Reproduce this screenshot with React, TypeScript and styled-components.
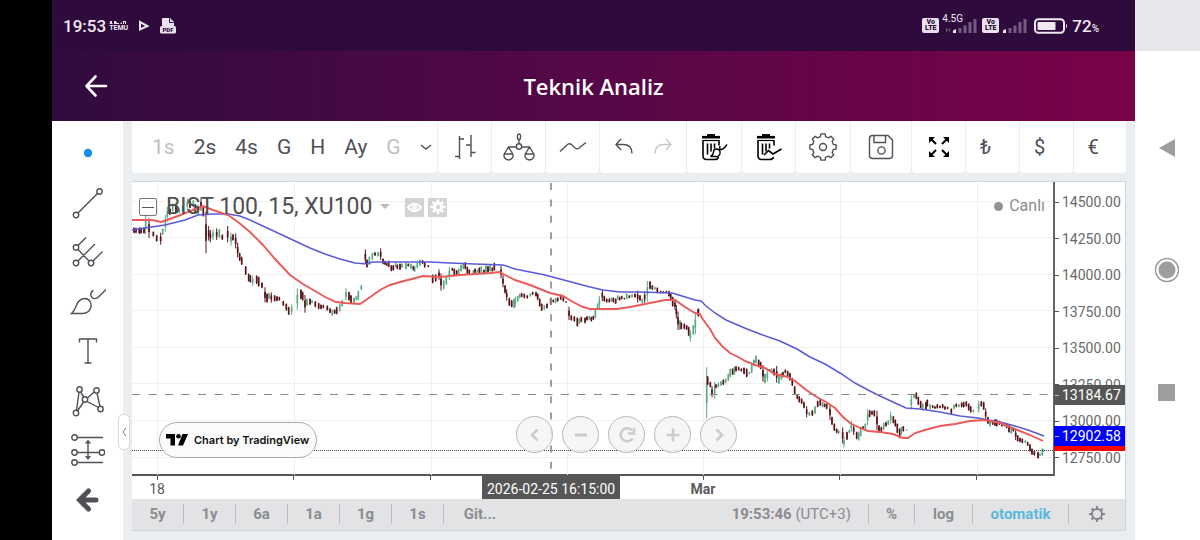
import React from 'react';
import styled, { createGlobalStyle, css } from 'styled-components';

const GlobalStyle = createGlobalStyle`
  *, *::before, *::after { box-sizing: border-box; }
  body { margin: 0; background: #fff; font-family: Roboto, "Liberation Sans", sans-serif; color: #4f5058; }
  button { margin: 0; padding: 0; border: 0; background: none; font: inherit; color: inherit; cursor: pointer; }
  svg { display: block; }
`;

/* ---------- device frame ---------- */

const Device = styled.div`
  display: grid;
  grid-template-columns: 52px minmax(0, 1fr) 65px;
  min-height: 100vh;
`;

const Bezel = styled.div`
  background: #000;
`;

const Screen = styled.div`
  display: flex;
  flex-direction: column;
  min-width: 0;
  background: #ebeef1;
`;

const NavRail = styled.nav`
  display: flex;
  flex-direction: column;
  align-items: center;
  justify-content: center;
  gap: 92px;
  padding-right: 2px;
  background: linear-gradient(#e8e6eb 51px, #fff 51px);
`;

const NavButton = styled.button`
  width: 30px;
  height: 30px;
  display: grid;
  place-items: center;
`;

/* ---------- status bar ---------- */

const StatusBar = styled.div`
  height: 51px;
  padding: 0 36px 0 11px;
  display: flex;
  align-items: center;
  justify-content: space-between;
  background: #2e0a3d;
  color: #f0e9f2;
`;

const StatusGroup = styled.div`
  display: flex;
  align-items: center;
`;

const Clock = styled.span`
  font-size: 17px;
  line-height: 20px;
  font-weight: 500;
`;

const Temu = styled.span`
  margin: 0 11px 0 3px;
  font-size: 7px;
  line-height: 6px;
  font-weight: 700;
`;

const VoLte = styled.span`
  width: 17px;
  height: 15px;
  padding-top: 1px;
  border-radius: 2px;
  background: #e9e2ec;
  color: #2e0a3d;
  font-size: 7px;
  line-height: 6px;
  font-weight: 900;
  text-align: center;
`;

const Signal = styled.span<{ $gap: number }>`
  position: relative;
  margin: 0 ${(p) => p.$gap}px 0 3px;
`;

const NetType = styled.span`
  position: absolute;
  left: 0;
  top: -4px;
  font-size: 10px;
  line-height: 10px;
`;

const Percent = styled.small`
  font-size: 10px;
  line-height: 10px;
  font-weight: 500;
`;

/* ---------- page header ---------- */

const Header = styled.header`
  height: 70px;
  display: grid;
  grid-template-columns: 88px 1fr 88px;
  align-items: center;
  background: linear-gradient(90deg, #300b3f, #560747 50%, #7a0249);
  color: #fff;
`;

const BackButton = styled.button`
  width: 88px;
  height: 70px;
  display: grid;
  place-items: center;
`;

const Title = styled.h1`
  margin: 0;
  text-align: center;
  font: 600 22px/28px "Open Sans", sans-serif;
`;

/* ---------- drawing tools ---------- */

const Workspace = styled.div`
  flex: 1;
  display: grid;
  grid-template-columns: 71px minmax(0, 1fr);
  column-gap: 9px;
`;

const Tools = styled.aside`
  position: relative;
  display: flex;
  flex-direction: column;
  align-items: center;
  justify-content: space-between;
  padding: 12px 0 20px;
  background: #fff;
`;

const ToolButton = styled.button`
  width: 40px;
  height: 40px;
  display: grid;
  place-items: center;
`;

const CollapseHandle = styled.button`
  position: absolute;
  right: -7px;
  top: 293px;
  width: 12px;
  height: 36px;
  display: grid;
  place-items: center;
  border: 1px solid #d5d8dc;
  border-radius: 5px;
  background: #fff;
`;

/* ---------- top toolbar ---------- */

const ChartColumn = styled.main`
  min-width: 0;
  padding-right: 9px;
`;

const Toolbar = styled.div`
  display: flex;
  gap: 1px;
  height: 52px;
  margin-bottom: 8px;
`;

const ToolGroup = styled.div<{ $width?: number }>`
  ${(p) => (p.$width ? css`flex: 0 0 ${p.$width}px;` : css`flex: 1;`)}
  display: flex;
  align-items: center;
  justify-content: center;
  border-radius: 0 0 4px 4px;
  background: #fff;
`;

const IntervalGroup = styled(ToolGroup)`
  min-width: 0;
  justify-content: flex-start;
  gap: 19px;
  padding-left: 20px;
`;

const IntervalButton = styled.button<{ $muted?: boolean }>`
  font-size: 21px;
  line-height: 28px;
  color: ${(p) => (p.$muted ? '#bfc0c4' : '#4f5058')};
`;

const IconButton = styled.button`
  width: 39px;
  height: 52px;
  display: grid;
  place-items: center;
`;

const CurrencyButton = styled(IconButton)`
  padding-right: 14px;
  font-size: 20px;
`;

/* ---------- chart ---------- */

const ChartFrame = styled.section`
  position: relative;
  border: 1px solid #ccd8dd;
  border-width: 1px 1px 1px 0;
  background: #fff;
`;

const PlotRow = styled.div`
  display: grid;
  grid-template-columns: minmax(0, 1fr) 72px;
`;

const Pane = styled.div`
  position: relative;
  height: 294px;
  border-bottom: 2px solid #555;
`;

const Plot = styled.svg`
  width: 100%;
  height: 293px;
`;

const PriceAxis = styled.div`
  position: relative;
  display: flex;
  flex-direction: column;
  justify-content: space-between;
  height: 294px;
  padding: 10px 0 8px;
  border-left: 2px solid #666;
`;

const Price = styled.div`
  display: flex;
  align-items: center;
  gap: 3px;
  font-size: 14px;
  line-height: 20px;
  color: #696969;
  &::before { content: ""; width: 4px; height: 1px; background: #555; }
`;

const PriceTag = styled(Price)<{ $top: number; $bg: string }>`
  position: absolute;
  left: -1px;
  right: 0;
  top: ${(p) => p.$top}px;
  height: 20px;
  padding-left: 1px;
  background: ${(p) => p.$bg};
  color: #fff;
  &::before { background: #bbb; }
`;

const Legend = styled.div`
  position: absolute;
  top: 11px;
  left: 7px;
  display: flex;
  align-items: center;
`;

const CollapseBox = styled.button`
  width: 18px;
  height: 18px;
  display: grid;
  place-items: center;
  border: 1px solid #777;
  border-radius: 2px;
  &::before { content: ""; width: 12px; height: 1px; background: #555; }
`;

const Symbol = styled.span`
  margin: 0 8px 0 9px;
  font-size: 23px;
  line-height: 28px;
  color: #4f4f4f;
`;

const Caret = styled.svg`
  margin-right: 11px;
`;

const LegendButton = styled.button`
  width: 19px;
  height: 19px;
  margin-left: 4px;
  display: grid;
  place-items: center;
  background: #d3d3d3;
`;

const Live = styled.div`
  position: absolute;
  top: 14px;
  right: 8px;
  display: flex;
  align-items: center;
  gap: 6px;
  font-size: 16px;
  line-height: 20px;
  color: #8d8d8d;
  &::before { content: ""; width: 9px; height: 9px; border-radius: 50%; background: #929292; }
`;

const Credit = styled.a`
  position: absolute;
  left: 27px;
  bottom: 16px;
  height: 36px;
  padding: 0 7px 0 6px;
  display: flex;
  align-items: center;
  gap: 6px;
  border: 1px solid #aaa;
  border-radius: 18px;
  background: #fbfbfb;
  color: #111;
  font: 600 11px/16px Inter, "Open Sans", sans-serif;
  white-space: nowrap;
  text-decoration: none;
`;

const ZoomControls = styled.div`
  position: absolute;
  left: 0;
  right: 0;
  top: 234px;
  display: flex;
  justify-content: center;
  gap: 9px;
  padding-right: 4px;
  pointer-events: none;
`;

const RoundButton = styled.button`
  width: 37px;
  height: 37px;
  display: grid;
  place-items: center;
  border: 1px solid #b9b9b9;
  border-radius: 50%;
  background: rgba(244, 244, 244, 0.85);
  pointer-events: auto;
`;

const TimeAxis = styled.div`
  position: relative;
  display: flex;
  justify-content: space-between;
  height: 23px;
  padding: 0 129px 0 5px;
`;

const TimeLabel = styled.div<{ $strong?: boolean }>`
  width: 40px;
  display: flex;
  flex-direction: column;
  align-items: center;
  font-size: 14px;
  line-height: 18px;
  font-weight: ${(p) => (p.$strong ? 700 : 400)};
  color: #5a5a5a;
  &::before { content: ""; width: 1px; height: 4px; background: #555; }
`;

const DateTag = styled.div`
  position: absolute;
  left: 350px;
  top: -1px;
  height: 24px;
  padding: 0 5px;
  background: #565656;
  color: #fff;
  font-size: 14px;
  line-height: 28px;
`;

/* ---------- bottom bar ---------- */

const RangeBar = styled.footer`
  display: flex;
  align-items: center;
  height: 31px;
  padding-bottom: 2px;
  background: #e3e3e5;
  color: #8b8c90;
  font-size: 15px;
  font-weight: 700;
`;

const BarButton = styled.button<{ $width: number; $divided?: boolean; $active?: boolean }>`
  width: ${(p) => p.$width}px;
  height: 20px;
  line-height: 20px;
  display: grid;
  place-items: center;
  ${(p) => p.$divided && css`border-right: 1px solid #bdbec1;`}
  ${(p) => p.$active && css`color: #59b9dc;`}
`;

const Timezone = styled.button`
  height: 20px;
  margin-left: auto;
  padding-right: 17px;
  border-right: 1px solid #bdbec1;
  line-height: 20px;
  span { font-weight: 400; }
`;

/* ---------- chart data ---------- */

type Session = { x: number; y: number; bars: string };

/* Each bar is "x high low", followed by u when it closed up; offsets are thirds of a pixel from the session origin. */
const sessions: Session[] = [
  {
    x: 130, y: 180,
    bars: `12 142 160,18 143 160,28 142 162,33 142 161,42 142 161,47 103 162 u,57 115 174,70 154 170,80 165 185,92 158 194,
98 145 165 u,106 105 155 u,112 80 125 u,120 85 105,128 70 95 u,138 72 98,148 85 100 u,158 75 95 u,172 55 90 u,180 62 85,190 60 82 u,
196 72 98,205 75 105 u,213 55 92,220 80 110,228 95 220,236 138 182,241 150 187,249 148 180 u,260 145 180,268 147 175 u,277 163 180,
293 138 187,303 158 197 u,309 162 182,317 160 205,323 188 232,329 218 243,335 230 255,347 258 285,356 280 305,361 285 308,368 287 318 u,
380 286 312,386 290 320,396 307 325,405 322 367,411 340 368,417 338 358 u,424 337 368,434 345 365,441 348 364,448 350 362,460 362 378,
469 370 392,476 380 405,485 373 405 u,502 325 390 u,513 328 358,518 335 362,525 345 398,531 355 378 u,540 355 375,546 360 370 u,
556 363 382,566 368 388,573 373 388,580 374 385,592 376 392,600 384 400,607 388 408 u,614 388 402,620 380 403,629 372 395 u,
636 360 380 u,648 325 362 u,657 335 362,663 345 372,672 352 370 u,679 347 362 u,685 332 360 u,694 315 330 u`,
  },
  {
    x: 350, y: 230,
    bars: `46 58 102,51 88 113,58 80 105 u,67 68 90 u,75 66 78,84 65 80 u,92 55 90,99 85 103,105 92 105,110 98 108,116 92 112,
124 105 124,130 105 122,137 98 112 u,142 103 118,150 100 120,156 100 114 u,168 97 118 u,175 100 110,183 100 117 u,190 107 122,
194 108 126 u,202 98 115 u,210 88 108 u,218 90 102,224 95 113,235 105 112,248 133 160,257 133 155,267 118 150,273 130 182,
281 150 178 u,289 138 165 u,298 110 150 u,307 113 123,313 115 138,320 120 138,326 115 135 u,333 104 125 u,340 98 118 u,346 96 118,
352 110 132,358 118 135,370 120 133 u,375 115 130,382 118 130 u,388 112 130,394 108 130 u,402 118 132,408 105 130 u,414 108 128,
420 105 125 u,427 112 125,433 98 122,453 107 145,459 135 172,465 165 190,470 178 212,478 203 228,485 210 232,492 205 235 u,
496 200 232 u,503 197 215 u,509 190 205 u,515 188 202,523 190 205,532 195 206,541 190 200 u,548 185 195,558 185 200,563 190 210,
569 205 230,575 220 243,583 225 240 u,591 220 236,602 203 225,610 208 218,617 203 220 u,623 202 215,632 193 210,640 200 215,
648 213 219,657 230 270,664 255 272,673 258 275,682 262 290,688 265 282 u,694 260 277,705 262 280,711 258 272,718 257 270 u,
724 260 275,730 257 270,736 235 265 u,743 220 240 u,748 198 235 u,757 178 213,763 197 215,770 205 218,778 205 218,784 202 215 u,
790 202 218,797 205 222,803 195 210 u,809 200 212,815 197 208,823 203 209,830 190 208 u,838 195 205,846 192 203 u,855 190 203,
863 182 218,870 195 213,877 205 220 u,884 185 218,892 153 215 u,900 153 178,907 165 180,915 170 179 u,922 172 190,932 182 190,
940 183 190,949 182 190,957 182 200,962 190 212,968 200 230,975 208 240,979 225 265,984 245 300,990 270 300 u,994 277 298,
1003 280 298,1010 285 300,1016 290 318,1021 300 335 u,1030 285 315 u,1036 250 312 u,1045 235 260`,
  },
  {
    x: 680, y: 280,
    bars: `55 87 108,80 262 415 u,83 288 315,91 305 322,96 318 352,104 305 357 u,108 312 325,115 308 322 u,123 303 318 u,
130 298 315,137 295 310 u,145 280 303 u,151 265 292 u,158 265 285,163 260 285 u,168 258 275,176 260 272,184 265 275,192 262 283,
200 265 292,208 275 283 u,215 250 280 u,222 238 258 u,228 226 250 u,236 238 262,242 245 268,249 255 305,255 280 310 u,262 270 305 u,
268 267 275,275 265 280 u,282 265 287,290 258 308,297 285 312 u,304 278 300 u,309 275 292,316 268 280,323 272 292,330 278 302,
337 293 318,344 318 345,352 342 358,358 348 368,365 355 372,372 365 385,380 378 412,388 395 408 u,397 390 408,405 378 402 u,
413 362 382,421 355 378,428 365 382 u,434 370 382,440 370 388,450 372 420,456 410 435,463 430 453,470 445 460,476 450 462 u,
488 442 490,492 470 502 u,501 455 480,508 448 460 u,514 422 455 u,521 432 465,530 455 478,536 455 482 u,542 440 470 u,549 438 450,
556 430 448 u,563 387 435 u,569 390 412,576 392 405,583 390 410,591 392 450,597 435 455,604 440 458,611 428 450 u,618 425 440,
625 420 435 u,632 395 430 u,640 408 430,646 418 440,652 430 460,659 445 475,664 440 465 u,670 438 455,680 448 453 u,694 345 388 u,
702 342 355 u,709 337 358,715 350 375,722 362 385,728 370 392 u,738 365 390,742 358 380,750 372 388 u,758 375 385,765 378 387,
772 372 386,780 376 385,788 372 385,795 378 390,803 380 388`,
  },
  {
    x: 880, y: 360,
    bars: `214 145 162,222 133 148 u,229 130 142,237 132 142 u,245 127 142,251 125 143,259 123 140,266 130 152,272 138 158,
280 148 158 u,296 122 158 u,304 123 140,311 125 150,317 145 180,324 170 192,330 180 200 u,338 182 195,345 177 198,350 178 200,
358 182 195,366 187 200,374 187 200 u,380 190 205,387 195 218,394 200 222 u,400 203 215,407 208 240,413 225 245,420 232 247,
427 235 250,436 240 250 u,443 245 258,450 252 275,456 265 285,463 272 287,474 275 296,480 280 288 u,487 265 288 u,490 268 275 u`,
  },
];

const fastAverage = `132,220 152,220 161,222 167,220 178,216 188,212 203,206 213,210 228,215 238,222 250,232 263,245 275,259
290,275 303,284 315,291 325,297 336,302 345,303 360,304 366,300 373,295 380,290 390,285 400,282 412,279 423,276 440,277 460,275
475,274 490,273 500,272 505,275 515,280 530,285 540,289 550,293 563,296 573,302 583,307 590,309 600,309 617,309 630,307 645,304
655,302 665,300 675,300 685,307 695,313 700,314 702,318 710,329 715,338 722,346 730,353 738,357 745,361 755,365 765,368 775,374
788,377 795,381 805,389 815,396 826,402 835,408 843,417 850,423 860,428 868,431 880,432 893,434 903,438 908,438 915,433 925,430
940,426 955,424 970,421 985,420 990,421 1000,423 1010,427 1020,431 1030,435 1043,441`;

const slowAverage = `132,230 145,228 165,225 185,220 198,215 213,214 228,214 240,216 250,220 265,227 280,234 295,241 310,248
325,254 340,259 355,263 367,264 372,262 385,262 430,262 450,263 475,264 503,265 515,269 530,272 545,275 560,279 575,283 590,287
603,290 620,292 640,292 672,293 682,296 695,300 701,301 706,306 715,313 726,320 747,329 760,334 780,341 797,349 810,357 825,364
840,373 855,383 868,390 880,396 893,402 906,408 920,409 940,412 960,416 978,418 988,420 1000,422 1015,426 1028,430 1044,436`;

const gridX = [157, 294, 431, 567, 703, 840, 977];
const gridY = [202, 238, 275, 311, 348, 384, 421, 458];
const prices = ['14500.00', '14250.00', '14000.00', '13750.00', '13500.00', '13250.00', '13000.00', '12750.00'];
const times = ['18', '', '', '', 'Mar', '', ''];

function Candles({ x, y, bars }: Session) {
  return (
    <g transform={`translate(${x} ${y}) scale(${1 / 3})`}>
      {bars.split(',').map((bar, i) => {
        const [bx, high, low, up] = bar.trim().split(' ');
        const h = Number(high);
        const l = Number(low);
        const inset = l - h > 30 ? (l - h) * 0.3 : 2;
        return (
          <g key={i} fill={up ? '#58ab83' : '#5a1218'}>
            <rect x={Number(bx) - 1.5} y={h} width={3} height={l - h} />
            <rect x={Number(bx) - 2.5} y={h + inset} width={5} height={l - h - inset * 2} />
          </g>
        );
      })}
    </g>
  );
}

function PriceChart() {
  return (
    <Plot viewBox="132 182 921 293" preserveAspectRatio="none" role="img" aria-label="BIST 100">
      <g stroke="#f0f0f0" strokeWidth="1">
        {gridX.map((x) => <path key={x} d={`M${x}.5 182V475`} />)}
        {gridY.map((y) => <path key={y} d={`M132 ${y - 1}.5H1054`} />)}
      </g>
      {sessions.map((s) => <Candles key={s.x} {...s} />)}
      <polyline points={slowAverage} fill="none" stroke="#5a5ad8" strokeWidth="1.5" />
      <polyline points={fastAverage} fill="none" stroke="#ea5a58" strokeWidth="1.9" />
      <path d="M132 450.5H1054" stroke="#444" strokeDasharray="1 1" />
      <path d="M132 394.5H1054" stroke="#888" strokeDasharray="8 8.500" />
      <path d="M551 183V475" stroke="#888" strokeWidth="1.6" strokeDasharray="7 9.400" />
    </Plot>
  );
}

/* ---------- icons ---------- */

type IconProps = { w: number; h: number; sw?: number; color?: string; children: React.ReactNode };

const Icon = ({ w, h, sw = 1.4, color = '#4f5058', children }: IconProps) => (
  <svg width={w} height={h} viewBox={`0 0 ${w} ${h}`} fill="none" stroke={color} strokeWidth={sw} aria-hidden="true">
    {children}
  </svg>
);

const gearPath = (c: number, outer: number, inner: number) => {
  const pts: string[] = [];
  for (let i = 0; i < 8; i++) {
    const a = (i * Math.PI) / 4 - Math.PI / 2;
    [[-0.24, inner], [-0.16, outer], [0.16, outer], [0.24, inner]].forEach(([d, r]) => {
      pts.push(`${(c + r * Math.cos(a + d)).toFixed(2)} ${(c + r * Math.sin(a + d)).toFixed(2)}`);
    });
  }
  return `M${pts.join('L')}Z`;
};

const SignalBars = ({ start }: { start: number }) => (
  <svg width={35 - start} height="16" viewBox={`${start} 0 ${35 - start} 16`} fill="#745c80" aria-hidden="true">
    <path d="M11 12.500l3-1.500v4h-3z" fill="#f0e9f2" />
    <path d="M4 9.500l2 2.500-2 2.500zM8 9.500v5L6.500 12z" />
    <path d="M16.500 10h3v5h-3zM21.500 7.500h3v7.500h-3zM26.500 4h3v11h-3zM31.500 1h3v14h-3z" />
  </svg>
);

const drawingTools = [
  { name: 'Cursor', icon: <Icon w={10} h={10}><circle cx="5" cy="5" r="4.200" fill="#1b8ee6" stroke="none" /></Icon> },
  {
    name: 'Trend line',
    icon: <Icon w={32} h={32}><circle cx="4" cy="28" r="2.700" /><circle cx="27.500" cy="4.500" r="2.700" /><path d="M6 26L25.500 6.500" /></Icon>,
  },
  {
    name: 'Pitchfork',
    icon: (
      <Icon w={32} h={32}>
        <circle cx="4" cy="11.500" r="2.700" /><circle cx="4" cy="27" r="2.700" /><circle cx="19" cy="27" r="2.700" />
        <path d="M6 9.500L14 1.500M6 25L23 8M21 25L30.500 15.500M6 13.500L17 25" />
      </Icon>
    ),
  },
  {
    name: 'Brush',
    icon: (
      <Icon w={36} h={28}>
        <path d="M1.500 25.500C6 22 5.500 17 8.500 13.500C12 9.500 17.500 9.500 20 13.500C23 18.500 19.500 25.500 12.500 25.500Z" />
        <path d="M23.500 2.500c-3 1-3.500 5-1.500 7 2 2 5 1 6.500-.5L36 1.500" />
      </Icon>
    ),
  },
  { name: 'Text', icon: <Icon w={20} h={28}><path d="M1.500 5.500V2h17v3.500M10 2v24M6.500 26h7" /></Icon> },
  {
    name: 'Patterns',
    icon: (
      <Icon w={32} h={32}>
        <circle cx="7.500" cy="4.500" r="2.700" /><circle cx="24.500" cy="5.500" r="2.700" /><circle cx="13" cy="14.500" r="2.700" />
        <circle cx="4" cy="28" r="2.700" /><circle cx="28.500" cy="24" r="2.700" />
        <path d="M7 7L4.500 25.500M8.500 7L12 12M15.500 13L22 7M25 8L28 21.500M15 16.500L26.500 22.500M11.500 17L5.500 26" />
      </Icon>
    ),
  },
  {
    name: 'Measure',
    icon: (
      <Icon w={34} h={32}>
        <circle cx="3.500" cy="3.500" r="2.700" /><circle cx="3.500" cy="18.500" r="2.700" /><circle cx="31" cy="18.500" r="2.700" />
        <circle cx="3.500" cy="28.500" r="2.700" /><path d="M6 3.500H32M6 18.500H28.500M6 28.500H32M17 8v16" />
        <path d="M17 5.500l3 4h-6zM17 26l3-4h-6z" fill="#4f5058" stroke="none" />
      </Icon>
    ),
  },
  { name: 'Back', icon: <Icon w={24} h={24} sw={5}><path d="M20 12H5M12.500 3L3.500 12l9 9" strokeLinecap="round" /></Icon> },
];

const TrashCan = () => (
  <>
    <path d="M2 4.200H20" strokeWidth="2.600" /><path d="M7 2.200h8" strokeWidth="2.200" /><path d="M2.500 7.500h17" strokeWidth="1.200" />
    <path d="M3 7.500v15Q3 26.500 6.500 26.500H14.500Q18 26.500 18.500 24M19 7.500v5" />
    <path d="M7.500 10.500v11M11 10.500v8M14.500 10.500v5" />
  </>
);

export default function App() {
  return (
    <>
      <GlobalStyle />
      <Device>
        <Bezel />
        <Screen>
          <StatusBar>
            <StatusGroup>
              <Clock>19:53</Clock>
              <Temu>
                <svg width="18" height="5" viewBox="0 0 18 5" fill="#e9e2ec" aria-hidden="true">
                  <path d="M0 4l1-1V1h2v2l1 1zM5 4V1h2l1 2h2v1zM11 4l2-2v2zM14 4V1h3v3h-1V2h-1v2z" />
                </svg>
                TEMU
              </Temu>
              <svg width="10" height="12" viewBox="0 0 10 12" aria-hidden="true">
                <path d="M1 2v7.500L8.500 6z" fill="none" stroke="#e9e2ec" strokeWidth="2" />
              </svg>
              <svg width="28" height="18" viewBox="-10 0 28 18" aria-hidden="true">
                <path d="M3 9V2q0-1 1-1h7l4 4v4z" fill="#e9e2ec" /><path d="M10.500 1.500v4h4" stroke="#2e0a3d" fill="none" />
                <rect x="1" y="9" width="16" height="7.500" rx="1.500" fill="#e9e2ec" />
                <text x="9" y="15" fontFamily="Roboto" fontWeight="900" fontSize="6" textAnchor="middle" fill="#2e0a3d">PDF</text>
              </svg>
            </StatusGroup>
            <StatusGroup>
              <VoLte>Vo<br />LTE</VoLte>
              <Signal $gap={5}><SignalBars start={0} /><NetType>4.5G</NetType></Signal>
              <VoLte>Vo<br />LTE</VoLte>
              <Signal $gap={7}><SignalBars start={10} /></Signal>
              <svg width="38" height="16" viewBox="0 0 38 16" aria-hidden="true">
                <rect x="1" y="1.200" width="29" height="13.600" rx="3.500" fill="none" stroke="#f0e9f2" strokeWidth="2" />
                <rect x="3.500" y="4" width="18" height="8" rx="1" fill="#f0e9f2" /><path d="M32 5.500q2 2.500 0 5z" fill="#f0e9f2" />
              </svg>
              <Clock>72<Percent>%</Percent></Clock>
            </StatusGroup>
          </StatusBar>

          <Header>
            <BackButton aria-label="Geri">
              <Icon w={24} h={24} sw={2.6} color="#fff"><path d="M22 12H2.500M11.500 2.500L2.500 12l9 9.500" strokeLinecap="round" strokeLinejoin="round" /></Icon>
            </BackButton>
            <Title>Teknik Analiz</Title>
          </Header>

          <Workspace>
            <Tools>
              {drawingTools.map((t) => <ToolButton key={t.name} aria-label={t.name}>{t.icon}</ToolButton>)}
              <CollapseHandle aria-label="Toggle panel">
                <Icon w={5} h={10} sw={1} color="#777"><path d="M4 1L1 5l3 4" /></Icon>
              </CollapseHandle>
            </Tools>

            <ChartColumn>
              <Toolbar>
                <IntervalGroup>
                  <IntervalButton $muted>1s</IntervalButton>
                  <IntervalButton>2s</IntervalButton>
                  <IntervalButton>4s</IntervalButton>
                  <IntervalButton>G</IntervalButton>
                  <IntervalButton>H</IntervalButton>
                  <IntervalButton>Ay</IntervalButton>
                  <IntervalButton $muted>G</IntervalButton>
                  <IntervalButton aria-label="More intervals">
                    <Icon w={12} h={6}><path d="M1 1l5 4 5-4" /></Icon>
                  </IntervalButton>
                </IntervalGroup>
                <ToolGroup $width={53}>
                  <IconButton aria-label="Bar style"><Icon w={22} h={24}><path d="M1 21.500h4.500M5.500 1v23M5.500 4H10M17 0v22M12 10h5M17 17.500h4.500" /></Icon></IconButton>
                </ToolGroup>
                <ToolGroup $width={53}>
                  <IconButton aria-label="Compare">
                    <Icon w={34} h={28}>
                      <rect x="15.500" y="1" width="3" height="5.500" rx="1.500" /><path d="M17 7v4M6.500 14h8M19.500 14h8" />
                      <circle cx="17" cy="13.500" r="2.700" />
                      <path d="M6.500 14L2.500 20.500a4.500 4.500 0 1 0 8 0zM27.500 14l-4 6.500a4.500 4.500 0 1 0 8 0zM2 21h9M23 21h9" />
                    </Icon>
                  </IconButton>
                </ToolGroup>
                <ToolGroup $width={53}>
                  <IconButton aria-label="Indicators"><Icon w={28} h={12}><path d="M1 10.500L8.500 3.500q2-1.500 4 0l3.500 3.500q2 1.500 4 0L27 1.500" /></Icon></IconButton>
                </ToolGroup>
                <ToolGroup $width={86}>
                  <IconButton aria-label="Undo"><Icon w={20} h={18}><path d="M7 1L2 6.500l5 5.500M2 6.500h8q8 .5 8 9" /></Icon></IconButton>
                  <IconButton aria-label="Redo" disabled><Icon w={20} h={18} color="#c6c7ca"><path d="M13 1l5 5.500-5 5.500M18 6.500h-8q-8 .5-8 9" /></Icon></IconButton>
                </ToolGroup>
                <ToolGroup $width={54}>
                  <IconButton aria-label="Remove drawings">
                    <Icon w={28} h={28} sw={1.6} color="#000">
                      <TrashCan /><path d="M10.500 23.500q3-1.500 3-4.500t3-3 3.500 2.500-1 4-4 1zM20 13q-1 3 1 3.500T27 11.500" strokeWidth="1.400" fill="#fff" />
                    </Icon>
                  </IconButton>
                </ToolGroup>
                <ToolGroup $width={53}>
                  <IconButton aria-label="Remove indicators">
                    <Icon w={28} h={28} sw={1.6} color="#000"><TrashCan /><path d="M9 22l4.500-4.500 4.500 3.500L26.500 16" /></Icon>
                  </IconButton>
                </ToolGroup>
                <ToolGroup $width={54}>
                  <IconButton aria-label="Settings">
                    <Icon w={30} h={30}><path d={gearPath(15, 13.3, 10.7)} strokeLinejoin="round" /><circle cx="15" cy="15" r="3.500" /></Icon>
                  </IconButton>
                </ToolGroup>
                <ToolGroup $width={60}>
                  <IconButton aria-label="Save">
                    <Icon w={26} h={26}>
                      <path d="M4 1.500h16L24.500 6v15.500q0 3-3 3H4.500q-3 0-3-3v-17q0-3 3-3zM6 1.500v7h11.500v-7" /><circle cx="13.500" cy="16.500" r="3.600" />
                    </Icon>
                  </IconButton>
                </ToolGroup>
                <ToolGroup $width={53}>
                  <IconButton aria-label="Full screen">
                    <Icon w={20} h={20} sw={2} color="#000">
                      <path d="M2 2l5 5M18 2l-5 5M2 18l5-5M18 18l-5-5" />
                      <path d="M0 0h6L0 6zM20 0v6l-6-6zM0 20v-6l6 6zM20 20h-6l6-6z" fill="#000" stroke="none" />
                    </Icon>
                  </IconButton>
                </ToolGroup>
                <ToolGroup $width={53}><CurrencyButton>₺</CurrencyButton></ToolGroup>
                <ToolGroup $width={53}><CurrencyButton>$</CurrencyButton></ToolGroup>
                <ToolGroup $width={52}><CurrencyButton>€</CurrencyButton></ToolGroup>
              </Toolbar>

              <ChartFrame>
                <PlotRow>
                  <Pane>
                    <PriceChart />
                    <Legend>
                      <CollapseBox aria-label="Collapse legend" />
                      <Symbol>BIST 100, 15, XU100</Symbol>
                      <Caret width="10" height="6" viewBox="0 0 10 6" aria-hidden="true"><path d="M0 0h10L5 5z" fill="#bbb" /></Caret>
                      <LegendButton aria-label="Hide">
                        <Icon w={15} h={11} sw={2} color="#fff"><path d="M1 5.500Q7.500-2 14 5.500 7.500 13 1 5.500z" /><circle cx="7.500" cy="5.500" r="1.500" /></Icon>
                      </LegendButton>
                      <LegendButton aria-label="Format">
                        <Icon w={16} h={16} sw={0}><path d={gearPath(8, 7.5, 5.2)} fill="#fff" /><circle cx="8" cy="8" r="2.200" fill="#d3d3d3" /></Icon>
                      </LegendButton>
                    </Legend>
                    <Live>Canlı</Live>
                    <Credit href="#tradingview">
                      <svg width="22" height="12" viewBox="0 0 22 12" aria-hidden="true">
                        <path d="M0 0h9v11.500H4.500V4.500H0zM16.500 0H22l-5 11.500h-5z" /><circle cx="12.500" cy="2.300" r="2.300" />
                      </svg>
                      Chart by TradingView
                    </Credit>
                  </Pane>
                  <PriceAxis>
                    {prices.map((p) => <Price key={p}>{p}</Price>)}
                    <PriceTag $top={249} $bg="#f00" />
                    <PriceTag $top={244} $bg="#00f">12902.58</PriceTag>
                    <PriceTag $top={203} $bg="#565656">13184.67</PriceTag>
                  </PriceAxis>
                </PlotRow>
                <ZoomControls>
                  <RoundButton aria-label="Scroll left"><Icon w={16} h={16} sw={2.6} color="#ccc"><path d="M10.500 2.500L5 8l5.500 5.500" /></Icon></RoundButton>
                  <RoundButton aria-label="Zoom out"><Icon w={16} h={16} sw={3} color="#ccc"><path d="M2 8h12" /></Icon></RoundButton>
                  <RoundButton aria-label="Reset"><Icon w={18} h={18} sw={2.6} color="#ccc"><path d="M14 4.500A6.500 6.500 0 1 0 14.500 12.500" /><path d="M16 2v5.500h-6" /></Icon></RoundButton>
                  <RoundButton aria-label="Zoom in"><Icon w={16} h={16} sw={2.6} color="#ccc"><path d="M1.500 8h13M8 1.500v13" /></Icon></RoundButton>
                  <RoundButton aria-label="Scroll right"><Icon w={16} h={16} sw={2.6} color="#ccc"><path d="M5.500 2.500L11 8l-5.500 5.500" /></Icon></RoundButton>
                </ZoomControls>
                <TimeAxis>
                  {times.map((t, i) => <TimeLabel key={i} $strong={t === 'Mar'}>{t}</TimeLabel>)}
                  <DateTag>2026-02-25 16:15:00</DateTag>
                </TimeAxis>
                <RangeBar>
                  {['5y', '1y', '6a', '1a', '1g', '1s'].map((r) => <BarButton key={r} $width={52} $divided>{r}</BarButton>)}
                  <BarButton $width={72}>Git...</BarButton>
                  <Timezone>19:53:46 <span>(UTC+3)</span></Timezone>
                  <BarButton $width={46} $divided>%</BarButton>
                  <BarButton $width={58} $divided>log</BarButton>
                  <BarButton $width={96} $divided $active>otomatik</BarButton>
                  <BarButton $width={56} aria-label="Chart settings">
                    <Icon w={18} h={18} sw={2} color="#85868a">
                      <circle cx="9" cy="9" r="5" />
                      <path d="M9 4V1M9 14v3M4 9H1M14 9h3M5.500 5.500l-2-2M12.500 5.500l2-2M5.500 12.500l-2 2M12.500 12.500l2 2" />
                    </Icon>
                  </BarButton>
                </RangeBar>
              </ChartFrame>
            </ChartColumn>
          </Workspace>
        </Screen>

        <NavRail>
          <NavButton aria-label="Back"><svg width="16" height="20" viewBox="0 0 16 20"><path d="M0 10L16 1v18z" fill="#9d9d9d" /></svg></NavButton>
          <NavButton aria-label="Home">
            <svg width="26" height="26" viewBox="0 0 26 26"><circle cx="13" cy="13" r="11.500" fill="none" stroke="#9d9d9d" strokeWidth="1.500" /><circle cx="13" cy="13" r="8.500" fill="#9d9d9d" /></svg>
          </NavButton>
          <NavButton aria-label="Recent apps"><svg width="17" height="17" viewBox="0 0 17 17"><rect width="17" height="17" fill="#9d9d9d" /></svg></NavButton>
        </NavRail>
      </Device>
    </>
  );
}
